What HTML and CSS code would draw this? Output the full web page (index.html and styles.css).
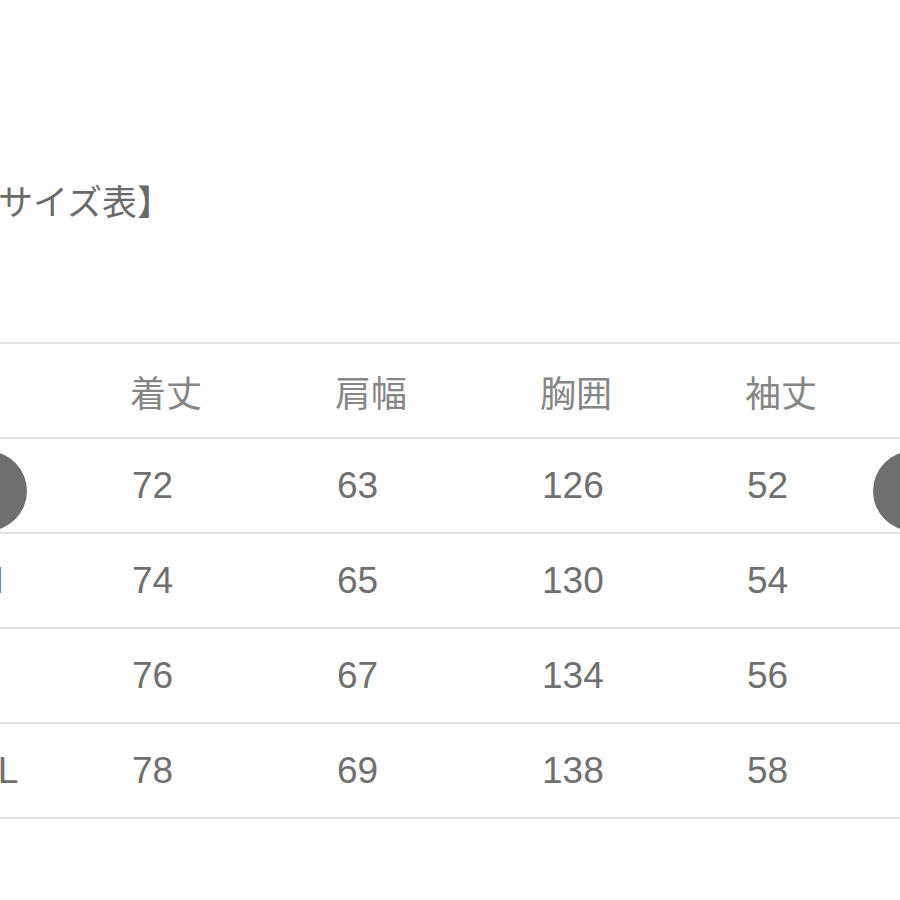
FILE: index.html
```html
<!DOCTYPE html>
<html lang="ja">
<head>
<meta charset="utf-8">
<link rel="stylesheet" href="styles.css">
</head>
<body>
<div class="page">
  <div class="title">【サイズ表】</div>
  <table class="size">
    <colgroup><col class="c"><col class="c"><col class="c"><col class="c"><col class="c"></colgroup>
    <tr class="head"><td class="first"></td><td>着丈</td><td>肩幅</td><td>胸囲</td><td>袖丈</td></tr>
    <tr><td class="first">S</td><td>72</td><td>63</td><td>126</td><td>52</td></tr>
    <tr><td class="first">M</td><td>74</td><td>65</td><td>130</td><td>54</td></tr>
    <tr><td class="first">L</td><td>76</td><td>67</td><td>134</td><td>56</td></tr>
    <tr><td class="first">XL</td><td>78</td><td>69</td><td>138</td><td>58</td></tr>
  </table>
  <div class="arrow left"></div>
  <div class="arrow right"></div>
</div>
</body>
</html>
```
FILE: styles.css
```css
html, body {
  margin: 0;
  padding: 0;
  background: #fff;
  overflow: hidden;
}
.page {
  position: relative;
  width: 900px;
  height: 900px;
  overflow: hidden;
  font-family: "Liberation Sans", "Noto Sans CJK JP", sans-serif;
}
.title {
  margin: 180px 0 0 -37px;
  font-family: "Noto Sans CJK JP", sans-serif;
  font-size: 35px;
  line-height: 40px;
  color: #6a6a6a;
  white-space: nowrap;
}
.size {
  margin: 122px 0 0 -75px;
  width: 1025px;
  table-layout: fixed;
  border-collapse: collapse;
  border-top: 2px solid #e3e3e3;
}
.c { width: 205px; }
.size td {
  height: 93px;
  padding: 0 0 0 2px;
  border-bottom: 2px solid #e3e3e3;
  font-size: 37px;
  color: #707070;
  text-align: left;
  vertical-align: middle;
  white-space: nowrap;
  overflow: visible;
}
.size td.first {
  padding-left: 48px;
}
.size tr.head td {
  padding-left: 0;
  font-family: "Noto Sans CJK JP", sans-serif;
  font-size: 36px;
  color: #868686;
}
.arrow {
  position: absolute;
  top: 451px;
  width: 80px;
  height: 80px;
  border-radius: 50%;
  background: #6f6f6f;
}
.arrow.left { left: -53px; }
.arrow.right { left: 873px; }
```
